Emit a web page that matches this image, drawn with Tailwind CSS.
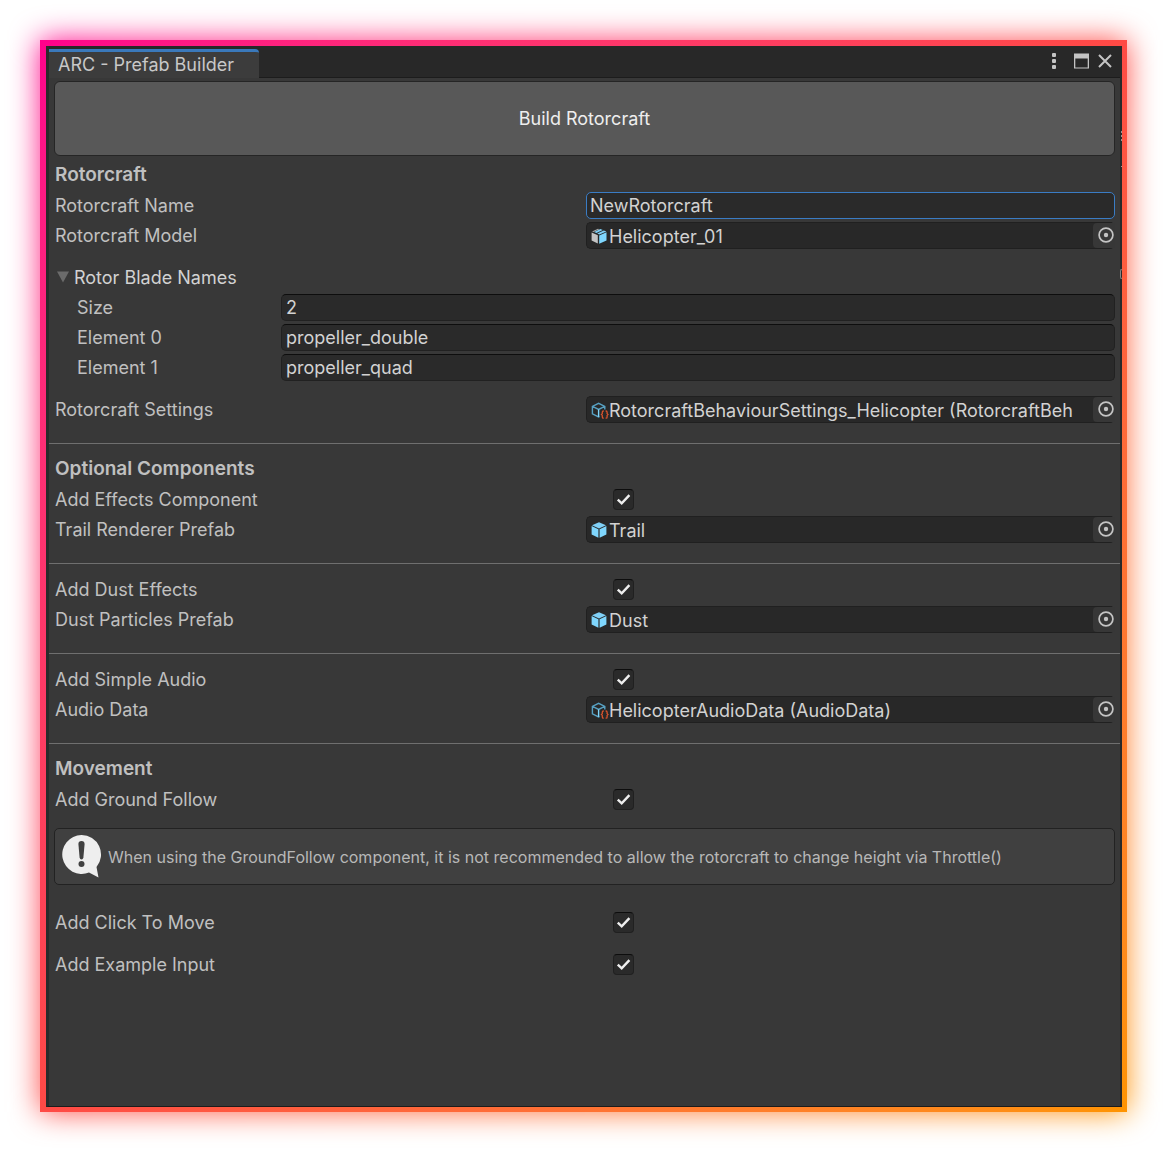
<!DOCTYPE html>
<html lang="en">
<head>
  <meta charset="UTF-8">
  <meta name="viewport" content="width=device-width, initial-scale=1.0">
  <title>ARC - Prefab Builder</title>
  <script src="https://cdn.jsdelivr.net/npm/@tailwindcss/browser@4"></script>
</head>
<body class="flex min-h-screen bg-white p-10 font-['Inter','Liberation_Sans',sans-serif] text-[18px] text-[#c0c0c0]">

  <!-- Shared icons -->
  <svg class="hidden">
    <symbol id="check" viewBox="0 0 21 21">
      <path d="M4.8 10.6 L8.7 14.4 L16.4 6.1" fill="none" stroke="#eeeeee" stroke-width="2.4" />
    </symbol>
    <symbol id="picker" viewBox="0 0 16 16">
      <circle cx="8" cy="8" r="6.9" fill="none" stroke="#c4c4c4" stroke-width="1.7" />
      <circle cx="8" cy="8" r="2.2" fill="#c4c4c4" />
    </symbol>
    <symbol id="prefab" viewBox="0 0 16 16">
      <path d="M8 0.3 L15 3.2 L8 6.4 L1 3.2 Z" fill="#7fd0f7" />
      <path d="M0.6 4.1 L7.4 7.2 V15.8 L0.6 12.6 Z" fill="#7fd6fd" />
      <path d="M15.4 4.1 L8.6 7.2 V15.8 L15.4 12.6 Z" fill="#7fd6fd" />
    </symbol>
    <symbol id="model" viewBox="0 0 16 16">
      <path d="M0.6 4.4 L6.8 7.2 V15.6 L0.6 12.6 Z" fill="#c4c4c4" />
      <path d="M1 3.4 L7 0.8 L8.4 1.3 L2.6 4 Z" fill="#a8a8a8" />
      <path d="M9.4 1 L11.8 2 L5.4 5 L3.2 4.1 Z" fill="#7fd0f7" />
      <path d="M12.8 2.4 L15.4 3.4 L8.4 6.4 L6.2 5.5 Z" fill="#7fd0f7" />
      <path d="M15.5 4.3 L8.2 7.4 V15.8 L15.5 12.6 Z" fill="#7fd6fd" />
    </symbol>
    <symbol id="asset" viewBox="0 0 18 17">
      <path d="M8.5 14.6 L7.6 14.9 L1.4 11.8 V4.4 L7.6 1.4 L13.8 4.4 V7.4 M1.4 4.4 L7.6 7.5 L13.8 4.4" fill="none" stroke="#57a0c2" stroke-width="1.4" />
      <path d="M7.6 7.5 V14.9" fill="none" stroke="#7fd6fd" stroke-width="1.4" />
      <path d="M12.8 9 H12.4 Q11.3 9 11.3 10.2 V11.6 L10.4 12.5 L11.3 13.4 V15 Q11.3 16.2 12.4 16.2 H12.8 M14.6 9 H15 Q16.1 9 16.1 10.2 V11.6 L17 12.5 L16.1 13.4 V15 Q16.1 16.2 15 16.2 H14.6" fill="none" stroke="#d9542c" stroke-width="1.3" />
    </symbol>
  </svg>

  <div class="relative flex flex-1">
    <!-- Glow -->
    <div class="absolute inset-0 bg-linear-135 from-[#ff008c] via-[#ff4a45] to-[#ff9400] blur-[15px]"></div>

    <!-- Frame -->
    <div class="relative flex flex-1 bg-linear-135 from-[#ff008c] via-[#ff4a45] to-[#ff9400] pt-1.5 pr-[5px] pb-[5px] pl-1.5">
      <main class="relative flex min-w-0 flex-1 flex-col border-r-2 border-b border-l-3 border-r-[#292929] border-b-[#1c1c1c] border-l-[#2b2b2b] bg-[#383838]">

        <!-- Slivers of the panel behind -->
        <div class="absolute top-[85px] -right-0.5 flex w-px flex-col gap-0.5">
          <span class="h-0.5 bg-[#9a9a9a]"></span>
          <span class="h-0.5 bg-[#9a9a9a]"></span>
          <span class="h-0.5 bg-[#9a9a9a]"></span>
        </div>
        <div class="absolute top-[120px] -right-0.5 h-px w-px bg-[#9a9a9a]"></div>
        <div class="absolute top-[223px] -right-0.5 h-2.5 w-0.5 rounded-l-sm border-y border-l border-[#858585]"></div>

        <!-- Tab bar -->
        <header class="flex h-8 items-end justify-between border-b border-[#1c1c1c] bg-[#282828]">
          <h1 class="-mb-px flex h-[29px] w-[210px] items-center rounded-tr-sm border-t-3 border-[#3a79bb] bg-[#3c3c3c] pb-0.5 pl-[9px] whitespace-nowrap text-[#c8c8c8]">ARC - Prefab Builder</h1>
          <div class="flex h-full items-center gap-2 pr-2 pb-0.5">
            <button class="mr-1" aria-label="Menu">
              <svg class="h-4 w-4" viewBox="0 0 16 16" fill="#c4c4c4"><rect x="6" y="0" width="4" height="4" rx="1"/><rect x="6" y="6" width="4" height="4" rx="1"/><rect x="6" y="12" width="4" height="4" rx="1"/></svg>
            </button>
            <button aria-label="Maximize">
              <svg class="h-4 w-4" viewBox="0 0 16 16" fill="#c4c4c4"><path fill-rule="evenodd" d="M0 0.5 H15 V15.5 H0 Z M1.3 5.5 V14.5 H13.7 V5.5 Z" /></svg>
            </button>
            <button aria-label="Close">
              <svg class="h-[14px] w-[14px]" viewBox="0 0 14 14"><path d="M1 1 L13 13 M13 1 L1 13" stroke="#c4c4c4" stroke-width="2" /></svg>
            </button>
          </div>
        </header>

        <div class="flex flex-col pt-[3px] pb-10">
          <button class="mx-[5px] mb-1 h-[75px] rounded-md border border-[#252525] bg-[#585858] text-[#eeeeee]">Build Rotorcraft</button>

          <!-- Rotorcraft -->
          <section class="pr-[5px] pl-1.5">
            <h2 class="flex h-[30px] items-center text-[19px] font-semibold">Rotorcraft</h2>
            <div class="grid h-[30px] grid-cols-2 items-center gap-x-0.5">
              <label for="name">Rotorcraft Name</label>
              <input id="name" type="text" value="NewRotorcraft" class="h-[27px] w-full min-w-0 rounded-[5px] border border-[#3a7cc4] bg-[#2a2a2a] px-[3px] text-[#d2d2d2] outline-none">
            </div>
            <div class="grid h-[30px] grid-cols-2 items-center gap-x-0.5">
              <label for="model-field">Rotorcraft Model</label>
              <div class="flex h-[27px] items-center rounded-[5px] border border-r-0 border-[#202020] bg-[#282828] pl-1">
                <svg class="mt-0.5 h-4 w-4 shrink-0"><use href="#model" /></svg>
                <input id="model-field" type="text" readonly value="Helicopter_01" class="h-full min-w-0 flex-1 px-0.5 pt-0.5 text-[#d2d2d2] outline-none">
                <button class="flex h-full w-[22px] items-center justify-end rounded-l bg-[#373737] pr-px" aria-label="Select model"><svg class="h-4 w-4"><use href="#picker" /></svg></button>
              </div>
            </div>

            <details open class="my-3">
              <summary class="flex h-[30px] list-none items-center gap-[5px] pl-0.5 text-[#d2d2d2]">
                <svg class="h-3 w-3" viewBox="0 0 12 12"><path d="M0 0.5 H12 L6 11.5 Z" fill="#6b6b6b" /></svg>
                Rotor Blade Names
              </summary>
              <div class="grid h-[30px] grid-cols-[204px_1fr] items-center pl-[22px]">
                <label for="size">Size</label>
                <input id="size" type="text" value="2" class="h-[27px] w-full min-w-0 rounded-[5px] border border-[#212121] border-t-[#0d0d0d] bg-[#2a2a2a] px-1 text-[#d2d2d2] outline-none">
              </div>
              <div class="grid h-[30px] grid-cols-[204px_1fr] items-center pl-[22px]">
                <label for="el0">Element 0</label>
                <input id="el0" type="text" value="propeller_double" class="h-[27px] w-full min-w-0 rounded-[5px] border border-[#212121] border-t-[#0d0d0d] bg-[#2a2a2a] px-1 text-[#d2d2d2] outline-none">
              </div>
              <div class="grid h-[30px] grid-cols-[204px_1fr] items-center pl-[22px]">
                <label for="el1">Element 1</label>
                <input id="el1" type="text" value="propeller_quad" class="h-[27px] w-full min-w-0 rounded-[5px] border border-[#212121] border-t-[#0d0d0d] bg-[#2a2a2a] px-1 text-[#d2d2d2] outline-none">
              </div>
            </details>

            <div class="grid h-[30px] grid-cols-2 items-center gap-x-0.5">
              <label for="settings">Rotorcraft Settings</label>
              <div class="flex h-[27px] items-center rounded-[5px] border border-r-0 border-[#202020] bg-[#282828] pl-1">
                <svg class="mt-0.5 -mr-0.5 h-[17px] w-[18px] shrink-0"><use href="#asset" /></svg>
                <input id="settings" type="text" readonly value="RotorcraftBehaviourSettings_Helicopter (RotorcraftBeh" class="h-full min-w-0 flex-1 px-0.5 pt-0.5 text-[#d2d2d2] outline-none">
                <button class="flex h-full w-[22px] items-center justify-end rounded-l bg-[#373737] pr-px" aria-label="Select settings"><svg class="h-4 w-4"><use href="#picker" /></svg></button>
              </div>
            </div>
          </section>

          <hr class="mt-[19px] mb-2.5 border-[#6f6f6f]">

          <!-- Optional Components -->
          <section class="pr-[5px] pl-1.5">
            <h2 class="flex h-[30px] items-center text-[19px] font-semibold">Optional Components</h2>
            <div class="grid h-[30px] grid-cols-2 items-center gap-x-0.5">
              <label for="effects">Add Effects Component</label>
              <span class="ml-[27px] grid h-[21px] w-[21px]">
                <input id="effects" type="checkbox" checked class="peer col-start-1 row-start-1 h-[21px] w-[21px] appearance-none rounded border border-[#202020] border-t-[#0d0d0d] bg-[#2a2a2a]">
                <svg class="pointer-events-none invisible col-start-1 row-start-1 h-[21px] w-[21px] peer-checked:visible"><use href="#check" /></svg>
              </span>
            </div>
            <div class="grid h-[30px] grid-cols-2 items-center gap-x-0.5">
              <label for="trail">Trail Renderer Prefab</label>
              <div class="flex h-[27px] items-center rounded-[5px] border border-r-0 border-[#202020] bg-[#282828] pl-1">
                <svg class="mt-0.5 h-4 w-4 shrink-0"><use href="#prefab" /></svg>
                <input id="trail" type="text" readonly value="Trail" class="h-full min-w-0 flex-1 px-0.5 pt-0.5 text-[#d2d2d2] outline-none">
                <button class="flex h-full w-[22px] items-center justify-end rounded-l bg-[#373737] pr-px" aria-label="Select trail prefab"><svg class="h-4 w-4"><use href="#picker" /></svg></button>
              </div>
            </div>
          </section>

          <hr class="mt-[19px] mb-2.5 border-[#6f6f6f]">

          <section class="pr-[5px] pl-1.5">
            <div class="grid h-[30px] grid-cols-2 items-center gap-x-0.5">
              <label for="dust">Add Dust Effects</label>
              <span class="ml-[27px] grid h-[21px] w-[21px]">
                <input id="dust" type="checkbox" checked class="peer col-start-1 row-start-1 h-[21px] w-[21px] appearance-none rounded border border-[#202020] border-t-[#0d0d0d] bg-[#2a2a2a]">
                <svg class="pointer-events-none invisible col-start-1 row-start-1 h-[21px] w-[21px] peer-checked:visible"><use href="#check" /></svg>
              </span>
            </div>
            <div class="grid h-[30px] grid-cols-2 items-center gap-x-0.5">
              <label for="dust-prefab">Dust Particles Prefab</label>
              <div class="flex h-[27px] items-center rounded-[5px] border border-r-0 border-[#202020] bg-[#282828] pl-1">
                <svg class="mt-0.5 h-4 w-4 shrink-0"><use href="#prefab" /></svg>
                <input id="dust-prefab" type="text" readonly value="Dust" class="h-full min-w-0 flex-1 px-0.5 pt-0.5 text-[#d2d2d2] outline-none">
                <button class="flex h-full w-[22px] items-center justify-end rounded-l bg-[#373737] pr-px" aria-label="Select dust prefab"><svg class="h-4 w-4"><use href="#picker" /></svg></button>
              </div>
            </div>
          </section>

          <hr class="mt-[19px] mb-2.5 border-[#6f6f6f]">

          <section class="pr-[5px] pl-1.5">
            <div class="grid h-[30px] grid-cols-2 items-center gap-x-0.5">
              <label for="audio">Add Simple Audio</label>
              <span class="ml-[27px] grid h-[21px] w-[21px]">
                <input id="audio" type="checkbox" checked class="peer col-start-1 row-start-1 h-[21px] w-[21px] appearance-none rounded border border-[#202020] border-t-[#0d0d0d] bg-[#2a2a2a]">
                <svg class="pointer-events-none invisible col-start-1 row-start-1 h-[21px] w-[21px] peer-checked:visible"><use href="#check" /></svg>
              </span>
            </div>
            <div class="grid h-[30px] grid-cols-2 items-center gap-x-0.5">
              <label for="audio-data">Audio Data</label>
              <div class="flex h-[27px] items-center rounded-[5px] border border-r-0 border-[#202020] bg-[#282828] pl-1">
                <svg class="mt-0.5 -mr-0.5 h-[17px] w-[18px] shrink-0"><use href="#asset" /></svg>
                <input id="audio-data" type="text" readonly value="HelicopterAudioData (AudioData)" class="h-full min-w-0 flex-1 px-0.5 pt-0.5 text-[#d2d2d2] outline-none">
                <button class="flex h-full w-[22px] items-center justify-end rounded-l bg-[#373737] pr-px" aria-label="Select audio data"><svg class="h-4 w-4"><use href="#picker" /></svg></button>
              </div>
            </div>
          </section>

          <hr class="mt-[19px] mb-2.5 border-[#6f6f6f]">

          <!-- Movement -->
          <section class="pr-[5px] pl-1.5">
            <h2 class="flex h-[30px] items-center text-[19px] font-semibold">Movement</h2>
            <div class="grid h-[30px] grid-cols-2 items-center gap-x-0.5">
              <label for="ground">Add Ground Follow</label>
              <span class="ml-[27px] grid h-[21px] w-[21px]">
                <input id="ground" type="checkbox" checked class="peer col-start-1 row-start-1 h-[21px] w-[21px] appearance-none rounded border border-[#202020] border-t-[#0d0d0d] bg-[#2a2a2a]">
                <svg class="pointer-events-none invisible col-start-1 row-start-1 h-[21px] w-[21px] peer-checked:visible"><use href="#check" /></svg>
              </span>
            </div>

            <div class="mt-3.5 mb-[22px] -ml-px flex min-h-[57px] items-center gap-1.5 rounded-[5px] border border-[#222222] bg-[#404040] pl-[7px]">
              <svg class="h-[43px] w-10 shrink-0" viewBox="0 0 40 43">
                <path d="M19.5 0 A19.5 19.5 0 0 1 34.5 32 L36.5 42.4 L27 37.6 A19.5 19.5 0 1 1 19.5 0 Z" fill="#eeeeee" />
                <path d="M16.4 9 Q16.4 6 19.5 6 Q22.6 6 22.6 9 L21.4 22.5 Q21 24.4 19.5 24.4 Q18 24.4 17.6 22.5 Z" fill="#404040" />
                <circle cx="19.5" cy="29" r="3" fill="#404040" />
              </svg>
              <p class="text-base text-[#b8b8b8]">When using the GroundFollow component, it is not recommended to allow the rotorcraft to change height via Throttle()</p>
            </div>

            <div class="mb-3 grid h-[30px] grid-cols-2 items-center gap-x-0.5">
              <label for="click">Add Click To Move</label>
              <span class="ml-[27px] grid h-[21px] w-[21px]">
                <input id="click" type="checkbox" checked class="peer col-start-1 row-start-1 h-[21px] w-[21px] appearance-none rounded border border-[#202020] border-t-[#0d0d0d] bg-[#2a2a2a]">
                <svg class="pointer-events-none invisible col-start-1 row-start-1 h-[21px] w-[21px] peer-checked:visible"><use href="#check" /></svg>
              </span>
            </div>
            <div class="grid h-[30px] grid-cols-2 items-center gap-x-0.5">
              <label for="example">Add Example Input</label>
              <span class="ml-[27px] grid h-[21px] w-[21px]">
                <input id="example" type="checkbox" checked class="peer col-start-1 row-start-1 h-[21px] w-[21px] appearance-none rounded border border-[#202020] border-t-[#0d0d0d] bg-[#2a2a2a]">
                <svg class="pointer-events-none invisible col-start-1 row-start-1 h-[21px] w-[21px] peer-checked:visible"><use href="#check" /></svg>
              </span>
            </div>
          </section>
        </div>
      </main>
    </div>
  </div>

</body>
</html>
